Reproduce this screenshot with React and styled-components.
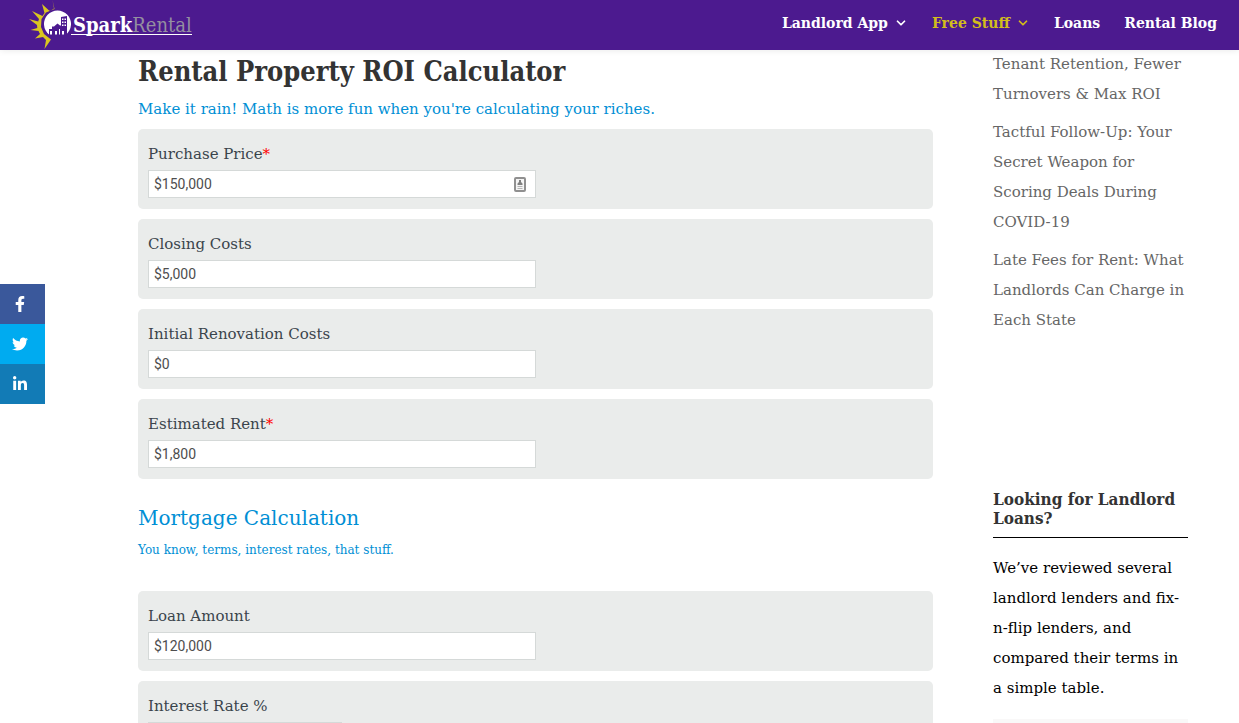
import React from 'react'
import styled, { createGlobalStyle } from 'styled-components'
import { FaFacebookF, FaTwitter, FaLinkedinIn } from 'react-icons/fa'
import { ChevronDown } from 'lucide-react'

const slab = '"DejaVu Serif", serif'
const slabNarrow = '"DejaVu Serif Condensed", "DejaVu Serif", serif'

const fields = [
    { id: 'price', label: 'Purchase Price', value: '$150,000', required: true, contact: true },
    { id: 'closing', label: 'Closing Costs', value: '$5,000' },
    { id: 'renovation', label: 'Initial Renovation Costs', value: '$0' },
    { id: 'rent', label: 'Estimated Rent', value: '$1,800', required: true },
]

const loanFields = [
    { id: 'loan', label: 'Loan Amount', value: '$120,000' },
    { id: 'rate', label: 'Interest Rate %', value: '', size: '25%' },
]

const posts = [
    'Tenant Retention, Fewer Turnovers & Max ROI',
    'Tactful Follow-Up: Your Secret Weapon for Scoring Deals During COVID-19',
    'Late Fees for Rent: What Landlords Can Charge in Each State',
]

function Field({ field }) {
    return (
        <FieldBox>
            <Label htmlFor={field.id}>
                {field.label}
                {field.required && <Star>*</Star>}
            </Label>
            <InputWrap $size={field.size}>
                <Input id={field.id} type="text" defaultValue={field.value} />
                {field.contact && <ContactIcon />}
            </InputWrap>
        </FieldBox>
    )
}

function ContactIcon() {
    return (
        <Contact viewBox="0 0 12 15" width="12" height="15" aria-hidden="true">
            <rect x="1" y="1" width="10" height="13" rx="1" fill="#f4f4f4" stroke="#909090" strokeWidth="2" />
            <path d="M5 3h2v2l1.500 1.500V8h-5V6.500L5 5z" fill="#808080" />
            <path d="M3.500 9.500h5M3.500 11.500h5" stroke="#b4b4b4" />
        </Contact>
    )
}

function LogoMark() {
    return (
        <svg viewBox="0 0 42 50" width="42" height="50" aria-hidden="true">
            <path
                fill="#d9c520"
                d="M23.500 0L25 8.500l-4 2.500-1.500-1L13 4l2.500 9-2 3L3 11l7 8-.8 2.500L0 19l8 6 .3 3L1.500 30l8 1 1.500 3-5 4.500 8-1.500 3 3L15.500 49 22 39.500 15 34l-3-7 .5-8L17 12.500l8.500-3.500z"
            />
            <path fill="#fff" d="M20 34.500a13.500 13.500 0 1 1 17 0z" />
            <path
                fill="#4c1a8f"
                d="M32 17l6-1v19h-3v-4h-2v4h-2v-6h-1v6h-2v-4h-2v4h-3v-4h-2v4h-1v-6h3v-2.500h2l3.500-3 2.500 2h1z"
            />
            <path fill="#fff" d="M33 18.500h1.500V20H33zM35.500 18.500H37V20h-1.500zM33 21.500h1.500V23H33zM35.500 21.500H37V23h-1.500zM33 24.500h1.500V26H33zM35.500 24.500H37V26h-1.500z" />
        </svg>
    )
}

export default function App() {
    return (
        <>
            <GlobalStyle />
            <Header>
                <Logo href="#">
                    <LogoMark />
                    <Wordmark>
                        Spark<span>Rental</span>
                    </Wordmark>
                </Logo>
                <Nav>
                    <NavLink href="#">
                        Landlord App <ChevronDown size={14} strokeWidth={3} />
                    </NavLink>
                    <NavLink href="#" $active>
                        Free Stuff <ChevronDown size={14} strokeWidth={3} />
                    </NavLink>
                    <NavLink href="#">Loans</NavLink>
                    <NavLink href="#">Rental Blog</NavLink>
                </Nav>
            </Header>

            <Social>
                <SocialLink href="#" aria-label="Facebook" $color="#3a589b">
                    <FaFacebookF />
                </SocialLink>
                <SocialLink href="#" aria-label="Twitter" $color="#00abf0">
                    <FaTwitter />
                </SocialLink>
                <SocialLink href="#" aria-label="LinkedIn" $color="#127bb6">
                    <FaLinkedinIn />
                </SocialLink>
            </Social>

            <Page>
                <Main>
                    <Title>Rental Property ROI Calculator</Title>
                    <Tagline>Make it rain! Math is more fun when you're calculating your riches.</Tagline>
                    <Fields>
                        {fields.map((f) => <Field key={f.id} field={f} />)}
                    </Fields>
                    <SectionTitle>Mortgage Calculation</SectionTitle>
                    <SectionNote>You know, terms, interest rates, that stuff.</SectionNote>
                    <Fields>
                        {loanFields.map((f) => <Field key={f.id} field={f} />)}
                    </Fields>
                </Main>
                <Sidebar>
                    <Posts>
                        {posts.map((p) => (
                            <li key={p}><a href="#">{p}</a></li>
                        ))}
                    </Posts>
                    <WidgetTitle>Looking for Landlord Loans?</WidgetTitle>
                    <WidgetText>
                        We’ve reviewed several landlord lenders and fix-n-flip lenders, and compared their terms in a simple table.
                    </WidgetText>
                    <Banner />
                </Sidebar>
            </Page>
        </>
    )
}

const GlobalStyle = createGlobalStyle`
  html {
    scrollbar-width: none;
  }
  * {
    box-sizing: border-box;
  }
  body {
    margin: 0;
    background: #fff;
    font-family: ${slab};
    font-size: 15px;
    line-height: 30px;
    color: #666;
  }
`;

const Header = styled.header`
  position: sticky;
  top: 0;
  z-index: 3;
  height: 50px;
  padding: 0 22px 0 29px;
  display: flex;
  justify-content: space-between;
  align-items: center;
  background: #4c1a8f;
  box-shadow: 0 0 7px rgba(0, 0, 0, 0.1);
`;

const Logo = styled.a`
  display: flex;
  align-items: center;
  color: #fff;
  text-decoration: none;
`;

const Wordmark = styled.span`
  padding-left: 2px;
  border-bottom: 1px solid #fff;
  font-family: ${slabNarrow};
  font-size: 20px;
  font-weight: bold;
  line-height: 18px;

  span {
    color: #948fa0;
    font-weight: normal;
  }
`;

const Nav = styled.nav`
  display: flex;
  gap: 24px;
  padding-bottom: 4px;
`;

const NavLink = styled.a`
  display: flex;
  align-items: center;
  gap: 6px;
  color: ${({ $active }) => ($active ? '#d3bd1b' : '#fff')};
  font-size: 14px;
  font-weight: bold;
  text-decoration: none;
  white-space: nowrap;
`;

const Social = styled.aside`
  position: fixed;
  top: 284px;
  left: 0;
  z-index: 2;
`;

const SocialLink = styled.a`
  display: flex;
  align-items: center;
  width: 45px;
  height: 40px;
  padding-left: 12px;
  background: ${({ $color }) => $color};
  color: #fff;
  font-size: 16px;
`;

const Page = styled.div`
  display: flex;
  gap: 60px;
  padding: 0 51px 0 138px;
`;

const Main = styled.main`
  flex: 1;
  min-width: 0;
`;

const Title = styled.h1`
  margin: 0;
  padding-top: 4px;
  color: #333;
  font-family: ${slabNarrow};
  font-size: 27px;
  line-height: 36px;
`;

const Tagline = styled.p`
  margin: 4px 0 5px;
  color: #008fd5;
`;

const Fields = styled.div`
  display: flex;
  flex-direction: column;
  gap: 10px;
`;

const FieldBox = styled.div`
  padding: 10px 10px 11px;
  background: #eaeceb;
  border-radius: 5px;
`;

const Label = styled.label`
  display: block;
  margin-bottom: 1px;
  color: #3a444c;
`;

const Star = styled.span`
  color: #f00;
`;

const InputWrap = styled.div`
  position: relative;
  width: ${({ $size }) => $size || '50%'};
  height: 28px;
`;

const Input = styled.input`
  display: block;
  width: 100%;
  height: 100%;
  padding: 0 5px;
  border: 1px solid #d5d9d8;
  background: #fff;
  color: #4e4e4e;
  font-family: Roboto, sans-serif;
  font-size: 14px;
`;

const Contact = styled.svg`
  position: absolute;
  top: 7px;
  right: 10px;
`;

const SectionTitle = styled.h2`
  margin: 24px 0 2px;
  color: #008fd5;
  font-size: 20px;
  font-weight: normal;
  line-height: 30px;
`;

const SectionNote = styled.p`
  margin: 0 0 26px;
  color: #008fd5;
  font-size: 12px;
`;

const Sidebar = styled.aside`
  width: 195px;
`;

const Posts = styled.ul`
  margin: -1px 0 155px;
  padding: 0;
  list-style: none;

  li {
    margin-bottom: 8px;
  }

  a {
    color: #666;
    text-decoration: none;
  }
`;

const WidgetTitle = styled.h4`
  margin: 0 0 15px;
  padding-bottom: 9px;
  border-bottom: 1px solid #000;
  color: #333;
  font-family: ${slabNarrow};
  font-size: 17px;
  line-height: 19px;
`;

const WidgetText = styled.p`
  margin: 0 0 16px;
  color: #000;
`;

const Banner = styled.div`
  height: 60px;
  background: #f9f8f8;
`;
